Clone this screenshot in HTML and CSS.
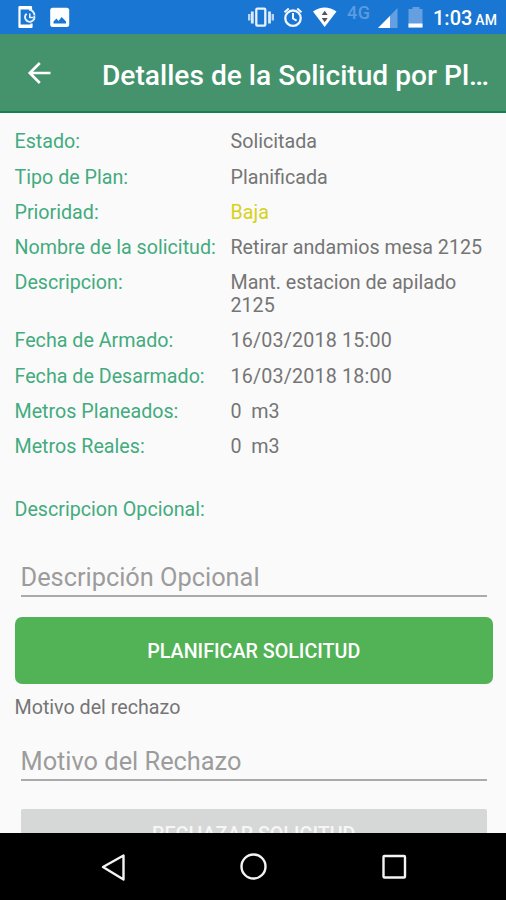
FILE: index.html
```html
<!DOCTYPE html>
<html lang="es">
<head>
<meta charset="utf-8">
<title>Detalles de la Solicitud</title>
<link rel="stylesheet" href="styles.css">
</head>
<body>
<div class="screen">
  <div class="status">
    <svg class="status-left" width="60" height="34" viewBox="0 0 60 34">
      <path d="M31 10V7.200H19.500V27H31.500V23.500" fill="none" stroke="#fff" stroke-width="2.200" stroke-linejoin="round"/>
      <path d="M20 8h11M20 26h11" stroke="#fff" stroke-width="2.800"/>
      <path d="M26.700 13.700a4.600 4.600 0 1 0 7.500 2.300" fill="none" stroke="#e4efff" stroke-width="1.900"/>
      <path d="M29 9.500q5 .8 5.500 6" fill="none" stroke="#e4efff" stroke-width="1.800"/>
      <path d="M29.800 13.500v4h3.500" fill="none" stroke="#e4efff" stroke-width="1.600"/>
    </svg>
    <svg class="status-photo" width="20" height="34" viewBox="0 0 20 34">
      <rect x=".2" y="7.700" width="19" height="19.300" rx="2.500" fill="#fff"/>
      <path d="M3.500 23.500v-2l3-3 2 2.500 3.200-4 4.300 4.500v2z" fill="#1976d2"/>
    </svg>
    <svg class="status-icons" width="85" height="34" viewBox="0 0 85 34">
      <rect x="8.300" y="8.700" width="9" height="17" rx="1" fill="none" stroke="#e8f2ff" stroke-width="2.300"/>
      <path d="M4.300 11.500v12M21.500 11.500v12" stroke="#dcebff" stroke-width="2.800"/>
      <path d="M1.200 14v6.500M24.800 14v6.500" stroke="#b9d5f5" stroke-width="2.400"/>
      <circle cx="45" cy="18.200" r="7.700" fill="none" stroke="#f0f6ff" stroke-width="2.300"/>
      <path d="M45 13v5.500l3.600 2.200M36.500 12.200l4.300-3.800M53.500 12.200l-4.300-3.800" fill="none" stroke="#f0f6ff" stroke-width="2"/>
      <path d="M65 11.500Q76.700 3.500 88.500 11.500L76.700 27z" fill="#fff"/>
      <path d="M73.700 15l3-4.300 3 4.300zM73.700 18l3 4.300 3-4.300z" fill="#555"/>
    </svg>
    <span class="network">4G</span>
    <svg class="status-power" width="46" height="34" viewBox="0 0 46 34">
      <path d="M19.500 8v20H0z" fill="#659fe0"/>
      <path d="M12 16v12H0z" fill="#fff"/>
      <path d="M34.500 7h7v2h3v18.500h-14V9h4z" fill="#659fe0"/>
      <path d="M30.500 23.500h14v4h-14z" fill="#fff"/>
    </svg>
    <span class="clock">1:03 <small>AM</small></span>
  </div>
  <header class="bar">
    <svg class="back" width="24" height="24" viewBox="0 0 24 24"><path d="M23.500 12H3M12.800 2L2.800 12l10 10" fill="none" stroke="#fff" stroke-width="2.700"/></svg>
    <h1>Detalles de la Solicitud por Pl…</h1>
  </header>
  <main class="content">
    <dl class="details">
      <dt>Estado:</dt><dd>Solicitada</dd>
      <dt>Tipo de Plan:</dt><dd>Planificada</dd>
      <dt>Prioridad:</dt><dd class="low">Baja</dd>
      <dt>Nombre de la solicitud:</dt><dd>Retirar andamios mesa 2125</dd>
      <dt>Descripcion:</dt><dd>Mant. estacion de apilado 2125</dd>
      <dt>Fecha de Armado:</dt><dd class="date">16/03/2018 15:00</dd>
      <dt>Fecha de Desarmado:</dt><dd class="date">16/03/2018 18:00</dd>
      <dt>Metros Planeados:</dt><dd>0 &nbsp;m3</dd>
      <dt>Metros Reales:</dt><dd>0 &nbsp;m3</dd>
    </dl>
    <div class="optional">Descripcion Opcional:</div>
    <div class="field">Descripción Opcional</div>
    <div class="primary">PLANIFICAR SOLICITUD</div>
    <div class="reason">Motivo del rechazo</div>
    <div class="field field-reason">Motivo del Rechazo</div>
    <div class="reject">RECHAZAR SOLICITUD</div>
  </main>
  <nav class="nav">
    <svg width="506" height="67" viewBox="0 0 506 67" fill="none" stroke="#f4f4f4" stroke-width="2.400">
      <path d="M123.500 22.500v24L103 34z" stroke-linejoin="round"/>
      <circle cx="253.500" cy="33.500" r="12"/>
      <rect x="383.500" y="23" width="21.500" height="21.500" rx="1"/>
    </svg>
  </nav>
</div>
</body>
</html>
```
FILE: styles.css
```css
* { box-sizing: border-box; }
body { margin: 0; font-family: Roboto, sans-serif; background: #fafafa; }
.screen { width: 506px; height: 900px; display: flex; flex-direction: column; overflow: hidden; }
.status { height: 34px; flex: none; display: flex; background: #1976d2; color: #fff; overflow: hidden; }
.status svg { flex: none; }
.status-left { margin-right: -10px; }
.status-icons { margin-left: 178px; overflow: visible; }
.network { margin-left: 14px; width: 31px; font-size: 18px; line-height: 26px; font-weight: 500; color: #5b9be0; letter-spacing: .5px; }
.clock { margin-left: 9px; font-size: 20px; line-height: 37px; font-weight: 500; white-space: nowrap; }
.clock small { font-size: 14px; margin-left: -2px; }
.bar { height: 79px; flex: none; display: flex; align-items: center; padding-left: 26.500px; background: #44936c; border-bottom: 2px solid #168054; color: #fff; }
.back { flex: none; }
.bar h1 { margin: 6px 0 0 51.500px; font-size: 28.150px; font-weight: 500; line-height: 34px; white-space: nowrap; }
.content { flex: 1; min-height: 0; overflow: hidden; padding: 17.400px 13px 0 14.500px; font-size: 19.680px; line-height: 23.100px; color: #757575; }
.details { display: grid; grid-template-columns: 216px 1fr; row-gap: 12.100px; margin: 0; }
.details dt, .optional { color: #43ab7e; white-space: nowrap; }
.details dd { margin: 0; }
.details .date { letter-spacing: .18px; }
.details .low { color: #d6d21c; }
.optional { margin-top: 39.500px; }
.field { height: 61px; margin: 15.500px 6px 0; padding-top: 26px; border-bottom: 2px solid #ababab; font-size: 25.350px; line-height: 30px; color: #9c9c9c; }
.primary { height: 67px; margin-top: 20px; border-radius: 7px; background: #52b256; color: #fff; text-align: center; line-height: 69px; font-weight: 500; }
.reason { margin-top: 12px; }
.field-reason { height: 60px; margin-top: 2px; padding-top: 24.500px; }
.reject { height: 60px; margin: 28px 6px 0; background: #d6d7d7; color: #f6f6f6; text-align: center; line-height: 52px; font-weight: 500; border-radius: 2px; }
.nav { height: 67px; flex: none; background: #000; }
.nav svg { display: block; }
```
